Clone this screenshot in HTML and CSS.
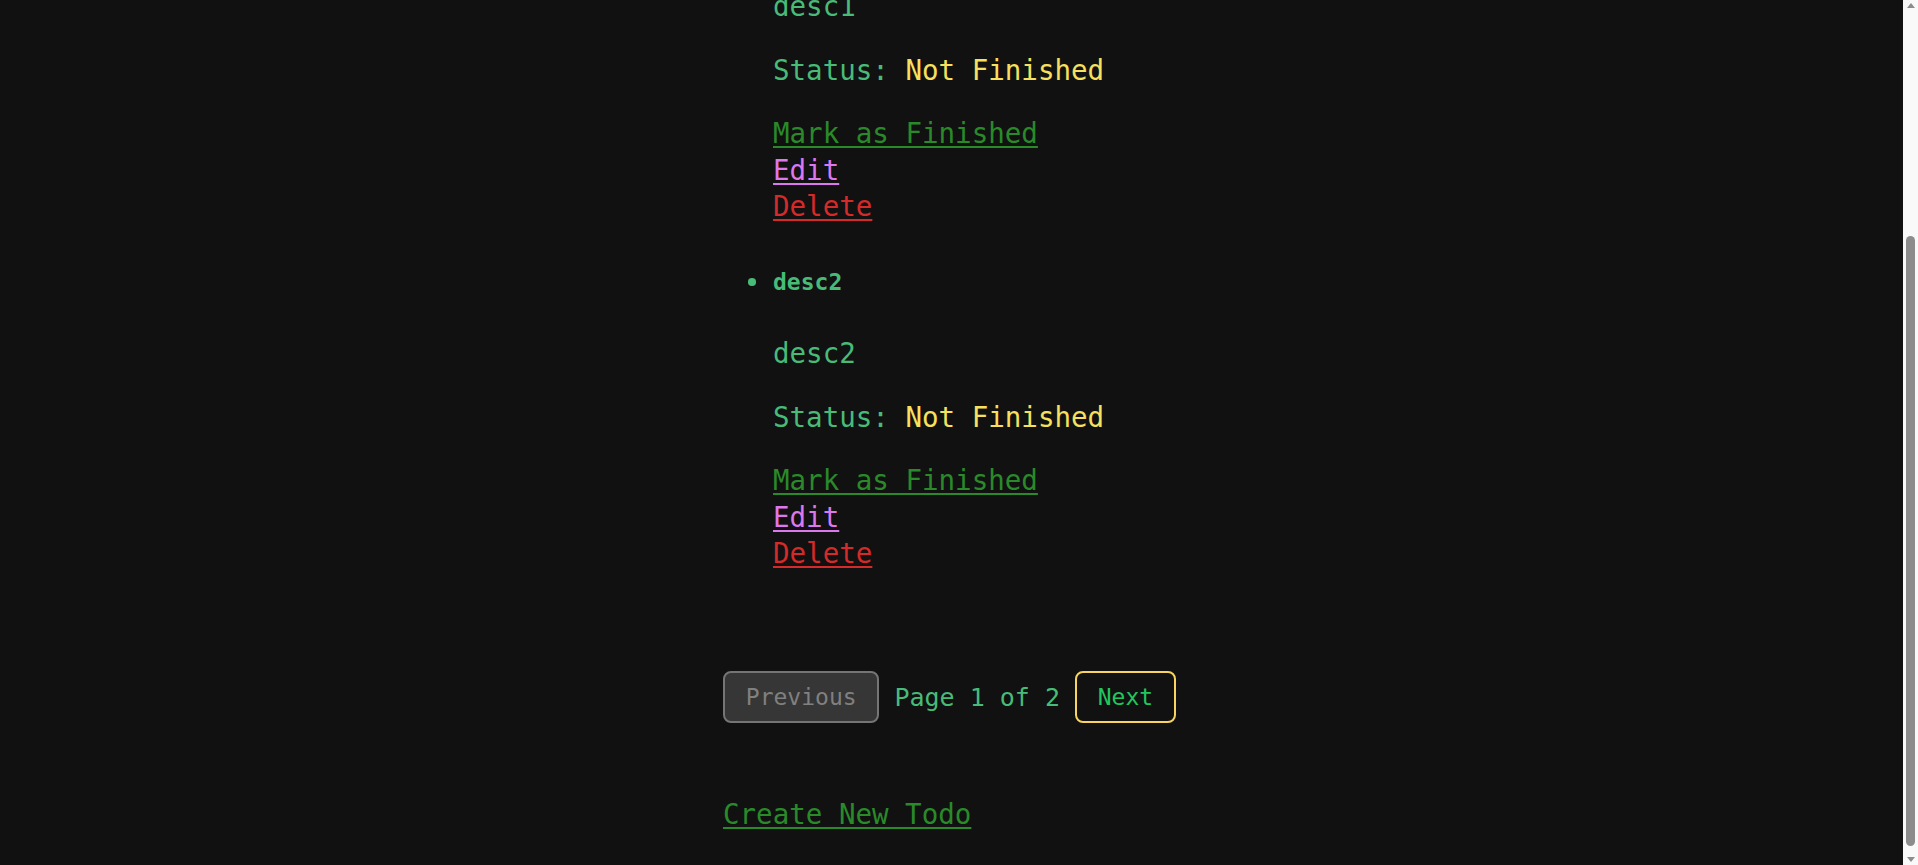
FILE: index.html
```html
<!DOCTYPE html>
<html lang="en">
<head>
<meta charset="utf-8">
<title>Todo List</title>
<link rel="stylesheet" href="styles.css">
</head>
<body>
<div class="container">
  <h1 class="title">Todo List</h1>
  <ul class="todo-list">
    <li class="todo-item">
      <h3 class="todo-title">desc1</h3>
      <p class="todo-text">desc1</p>
      <p class="todo-text">Status: <span class="status-pending">Not Finished</span></p>
      <div class="todo-actions">
        <a href="#" class="action action-finish">Mark as Finished</a>
        <a href="#" class="action action-edit">Edit</a>
        <a href="#" class="action action-delete">Delete</a>
      </div>
    </li>
    <li class="todo-item">
      <h3 class="todo-title">desc2</h3>
      <p class="todo-text">desc2</p>
      <p class="todo-text">Status: <span class="status-pending">Not Finished</span></p>
      <div class="todo-actions">
        <a href="#" class="action action-finish">Mark as Finished</a>
        <a href="#" class="action action-edit">Edit</a>
        <a href="#" class="action action-delete">Delete</a>
      </div>
    </li>
  </ul>
  <div class="pagination">
    <button class="page-btn page-btn-disabled" disabled>Previous</button>
    <span class="page-info">Page 1 of 2</span>
    <button class="page-btn page-btn-next">Next</button>
  </div>
  <p class="create-row"><a href="#" class="create-link">Create New Todo</a></p>
</div>
<div class="scrollbar" aria-hidden="true">
  <span class="sb-arrow sb-up"></span>
  <div class="sb-track"><div class="sb-thumb"></div></div>
  <span class="sb-arrow sb-down"></span>
</div>
<script src="script.js"></script>
</body>
</html>
```
FILE: styles.css
```css
html, body {
  background: #111111;
}
body {
  margin: 0;
  padding-right: 15px;
  font-family: "DejaVu Sans Mono", monospace;
  color: #48bb78;
  line-height: 1.32;
}
.container {
  width: 457px;
  margin: 0 auto;
  padding: 80px 0 32.4px;
}
.title {
  font-size: 40px;
  margin: 0 0 101px;
  line-height: 1.32;
}
.todo-list {
  margin: 0;
  padding: 0 0 0 50px;
  list-style: none;
}
.todo-item {
  font-size: 23px;
}
.todo-title {
  display: flex;
  align-items: center;
  font-size: 23px;
  font-weight: bold;
  margin: 42.4px 0 37.7px;
  line-height: 1.32;
}
.todo-title::before {
  content: "";
  flex: none;
  width: 7.5px;
  height: 7.5px;
  border-radius: 50%;
  background: #48bb78;
  margin-left: -24.75px;
  margin-right: 17.25px;
}
.todo-text {
  font-size: 27.5px;
  margin: 27.5px 0;
}
.status-pending {
  color: #f6e05e;
}
.todo-actions {
  display: flex;
  flex-direction: column;
  align-items: flex-start;
  font-size: 27.5px;
}
.action {
  text-decoration: underline;
  text-decoration-thickness: 2px;
  text-underline-offset: 3px;
}
.action-finish { color: #2a8a2a; }
.action-edit { color: #dd77ee; }
.action-delete { color: #d42a2a; }
.pagination {
  display: flex;
  align-items: center;
  gap: 15px;
  margin-top: 99.8px;
}
.page-btn {
  font-family: "DejaVu Sans Mono", monospace;
  font-size: 23px;
  line-height: 1.32;
  padding: 8.8px 20.8px;
  border: 2px solid #f8d35e;
  border-radius: 8px;
  background: transparent;
  color: #22c55e;
}
.page-btn-disabled {
  background: #363636;
  border-color: #757575;
  color: #808080;
}
.page-info {
  font-size: 25px;
  color: #48bb78;
}
.create-row {
  font-size: 27.5px;
  margin: 73.3px 0 0;
}
.create-link {
  color: #2a8a2a;
  text-decoration: underline;
  text-decoration-thickness: 2px;
  text-underline-offset: 3px;
}

/* window scrollbar */
.scrollbar {
  position: fixed;
  top: 0;
  right: 0;
  width: 15px;
  height: 100vh;
  background: #f9f9f9;
  display: flex;
  flex-direction: column;
  align-items: center;
}
.sb-arrow {
  flex: none;
  width: 0;
  height: 0;
  border-left: 4.5px solid transparent;
  border-right: 4.5px solid transparent;
}
.sb-up {
  margin-top: 3px;
  border-bottom: 5px solid #8c8c8c;
}
.sb-down {
  margin-bottom: 3px;
  border-top: 5px solid #8c8c8c;
}
.sb-track {
  flex: 1;
  width: 100%;
  display: flex;
  flex-direction: column;
  align-items: center;
}
.sb-thumb {
  width: 9px;
  height: 610px;
  margin-top: 228px;
  border-radius: 5px;
  background: #8c8c8c;
}
```
FILE: script.js
```js
window.scrollTo(0, document.documentElement.scrollHeight);
```
